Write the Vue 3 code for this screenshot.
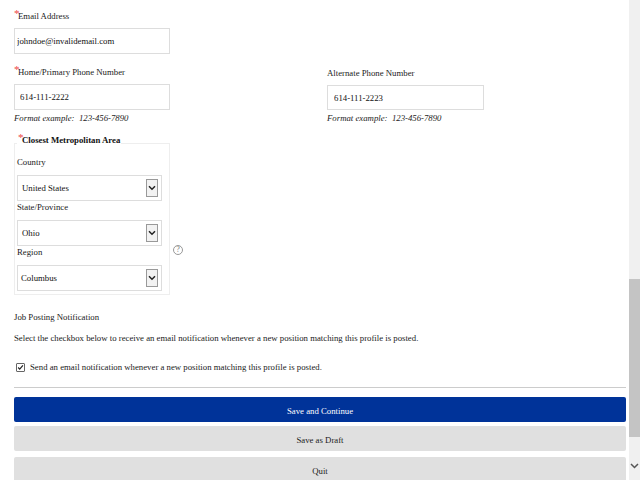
<template>
  <div class="page">
    <main class="content">
      <div class="field email-field">
        <label class="label"><span class="req">*</span>Email Address</label>
        <input class="text-input email-input" type="text" value="johndoe@invalidemail.com" />
      </div>

      <div class="phones">
        <div class="field">
          <label class="label"><span class="req">*</span>Home/Primary Phone Number</label>
          <input class="text-input" type="text" value="614-111-2222" />
          <div class="hint">Format example:&nbsp; 123-456-7890</div>
        </div>
        <div class="field alt">
          <label class="label">Alternate Phone Number</label>
          <input class="text-input" type="text" value="614-111-2223" />
          <div class="hint">Format example:&nbsp; 123-456-7890</div>
        </div>
      </div>

      <div class="metro">
        <fieldset class="metro-box">
          <legend><span class="req">*</span><b>Closest Metropolitan Area</b></legend>
          <div v-for="s in selects" :key="s.label" class="select-row">
            <div class="select-label">{{ s.label }}</div>
            <div class="select">
              <span :style="{ paddingLeft: s.pad + 'px' }">{{ s.value }}</span>
              <span class="select-btn">
                <svg width="8" height="6" viewBox="0 0 8 6"><path d="M1 1.2l3 3 3-3" fill="none" stroke="#222" stroke-width="1.5" /></svg>
              </span>
            </div>
          </div>
        </fieldset>
        <span class="help">?</span>
      </div>

      <div class="notify-title">Job Posting Notification</div>
      <p class="notify-text">Select the checkbox below to receive an email notification whenever a new position matching this profile is posted.</p>
      <label class="check">
        <span class="box">
          <svg width="9" height="9" viewBox="0 0 9 9"><path d="M1.5 4.5l2 2.2L7.6 1.8" fill="none" stroke="#222" stroke-width="1.5" /></svg>
        </span>
        Send an email notification whenever a new position matching this profile is posted.
      </label>

      <hr class="rule" />

      <button class="btn primary">Save and Continue</button>
      <button class="btn draft">Save as Draft</button>
      <button class="btn">Quit</button>
    </main>

    <div class="scrollbar">
      <div class="thumb"></div>
      <svg class="arrow" width="9" height="6" viewBox="0 0 9 6"><path d="M1 1l3.5 3.5L8 1" fill="none" stroke="#555" stroke-width="1.5" /></svg>
    </div>
  </div>
</template>

<script setup>
const selects = [
  { label: 'Country', value: 'United States', pad: 4 },
  { label: 'State/Province', value: 'Ohio', pad: 4 },
  { label: 'Region', value: 'Columbus', pad: 3 },
]
</script>

<style>
html, body { margin: 0; overflow: hidden; background: #fff; }
</style>

<style scoped>
.page {
  width: 640px; height: 480px; overflow: hidden;
  display: flex; background: #fff;
  font-family: "Liberation Serif", "Times New Roman", serif;
  font-size: 8.75px; color: #222;
}
.content { width: 612px; margin-left: 14px; flex: none; padding-top: 10px; }
.scrollbar {
  width: 11px; margin-left: 3px; height: 480px; background: #f0f0f0;
  display: flex; flex-direction: column; align-items: center;
}
.thumb { width: 100%; height: 158px; margin-top: 279px; background: #c4c4c4; }
.arrow { margin-top: 26px; }

.field { width: 157px; }
.label { display: block; line-height: 12px; height: 18px; color: #222; }
.req {
  color: #e44; font-size: 11px; letter-spacing: -1.5px;
  line-height: 0; vertical-align: 2px;
}
.text-input {
  display: block; box-sizing: border-box; width: 156px; height: 26px;
  padding: 0 0 0 5px; border: 1px solid #ddd; outline: none;
  font: inherit; color: #111; background: #fff;
}
.email-field { margin-bottom: 12px; }
.email-input { padding-left: 2px; }
.hint { font-style: italic; margin-top: 3px; line-height: 11px; }
.phones { display: flex; }
.alt { margin-left: 156px; width: 157px; padding-top: 1px; }
.alt .text-input { width: 157px; height: 25px; padding-left: 6px; }

.metro { display: flex; align-items: flex-end; margin-top: 10px; }
.metro-box {
  box-sizing: border-box; width: 156px; margin: 0;
  padding: 4px 7px 3px 2px; border: 1px solid #eee;
}
.metro-box legend { padding: 0 1px 6px; margin-left: 0; line-height: 12px; color: #111; }
.select-row { height: 45px; }
.select-label { height: 19px; line-height: 12px; }
.select {
  box-sizing: border-box; width: 145px; height: 26px;
  display: flex; align-items: center; justify-content: space-between;
  border: 1px solid #ddd; color: #111;
}
.select-btn {
  box-sizing: border-box; width: 12px; height: 18px; margin-right: 3px;
  border: 1px solid #999; background: #f2f2f2;
  display: flex; align-items: center; justify-content: center;
}
.help {
  width: 8px; height: 8px; margin: 0 0 40px 3px; border: 1px solid #999; border-radius: 50%;
  font-size: 8px; line-height: 8px; text-align: center; color: #777;
}

.notify-title { margin-top: 16px; line-height: 12px; }
.notify-text { margin: 9px 0 0; line-height: 12px; }
.check { display: flex; align-items: center; margin: 17px 0 0 2px; line-height: 12px; gap: 5px; }
.box {
  box-sizing: border-box; width: 9px; height: 9px; border: 1px solid #666; border-radius: 1px;
  display: flex; align-items: center; justify-content: center;
}
.rule { border: 0; border-top: 1px solid #ccc; margin: 14px 0 9px; }
.btn {
  display: block; box-sizing: border-box; width: 612px; height: 25px; margin: 0 0 4px; padding: 2px 0 0;
  border: 0; border-radius: 2px; background: #e0e0e0;
  font: inherit; color: #222; text-align: center;
}
.draft { margin-bottom: 6px; }
.primary { background: #003399; color: #fff; }
</style>
